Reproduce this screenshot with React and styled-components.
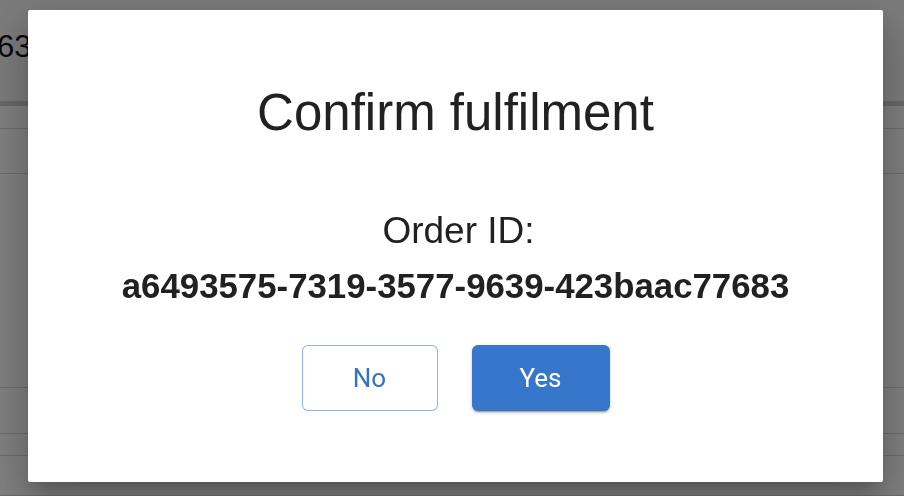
import React from "react";
import styled, { createGlobalStyle } from "styled-components";

const GlobalStyle = createGlobalStyle`
  html, body { margin: 0; padding: 0; }
  body {
    width: 904px;
    height: 496px;
    overflow: hidden;
    font-family: "Liberation Sans", Arial, sans-serif;
    background: #ffffff;
  }
`;

const Page = styled.div`
  width: 904px;
  height: 496px;
  background: #f7f7f7;
  display: flex;
  flex-direction: column;
`;

const Header = styled.div`
  display: flex;
  align-items: center;
  border-bottom: 5px solid #d0d0d0;
  box-sizing: border-box;
  height: 106px;
`;

const HeaderText = styled.span`
  font-size: 31px;
  color: #111;
  margin-left: -3px;
  margin-top: -8px;
`;

const Row = styled.div`
  height: ${(p) => p.$h}px;
  border-bottom: 1px solid #d8d8d8;
  box-sizing: border-box;
  background: #ffffff;
`;

const Overlay = styled.div`
  position: fixed;
  inset: 0;
  background: rgba(0, 0, 0, 0.5);
  display: flex;
  padding: 10px 21px 14px 28px;
  box-sizing: border-box;
`;

const Dialog = styled.div`
  flex: 1;
  background: #ffffff;
  border-radius: 2px;
  box-shadow: 0px 11px 15px -7px rgba(0, 0, 0, 0.2),
    0px 24px 38px 3px rgba(0, 0, 0, 0.14), 0px 9px 46px 8px rgba(0, 0, 0, 0.12);
  display: flex;
  flex-direction: column;
  align-items: center;
  padding-top: 72px;
  box-sizing: border-box;
`;

const Title = styled.h2`
  margin: 0;
  font-weight: 400;
  font-size: 51px;
  line-height: 61px;
  color: #212121;
`;

const Label = styled.div`
  margin-top: 66px;
  margin-left: 6px;
  font-size: 37px;
  line-height: 44px;
  color: #212121;
`;

const OrderId = styled.div`
  margin-top: 13px;
  font-size: 34.8px;
  line-height: 40px;
  font-weight: 700;
  color: #212121;
`;

const Actions = styled.div`
  margin-top: 39px;
  display: flex;
  gap: 34px;
`;

const Button = styled.button`
  height: 66px;
  width: ${(p) => (p.$primary ? 138 : 136)}px;
  box-sizing: border-box;
  border-radius: 6px;
  font-family: Roboto, "Liberation Sans", sans-serif;
  font-size: 26px;
  font-weight: 400;
  cursor: pointer;
  border: ${(p) => (p.$primary ? "none" : "1.5px solid rgba(54, 118, 203, 0.55)")};
  background: ${(p) => (p.$primary ? "#3676cb" : "#ffffff")};
  color: ${(p) => (p.$primary ? "#ffffff" : "#3372c6")};
  box-shadow: ${(p) =>
    p.$primary
      ? "0px 3px 1px -2px rgba(0,0,0,0.2), 0px 2px 2px 0px rgba(0,0,0,0.14), 0px 1px 5px 0px rgba(0,0,0,0.12)"
      : "none"};
`;

export default function App() {
  return (
    <>
      <GlobalStyle />
      <Page>
        <Header>
          <HeaderText>63</HeaderText>
        </Header>
        <Row $h={23} />
        <Row $h={45} />
        <Row $h={214} />
        <Row $h={46} />
        <Row $h={22} />
        <Row $h={40} />
      </Page>
      <Overlay>
        <Dialog role="dialog" aria-modal="true">
          <Title>Confirm fulfilment</Title>
          <Label>Order ID:</Label>
          <OrderId>a6493575-7319-3577-9639-423baac77683</OrderId>
          <Actions>
            <Button>No</Button>
            <Button $primary>Yes</Button>
          </Actions>
        </Dialog>
      </Overlay>
    </>
  );
}
